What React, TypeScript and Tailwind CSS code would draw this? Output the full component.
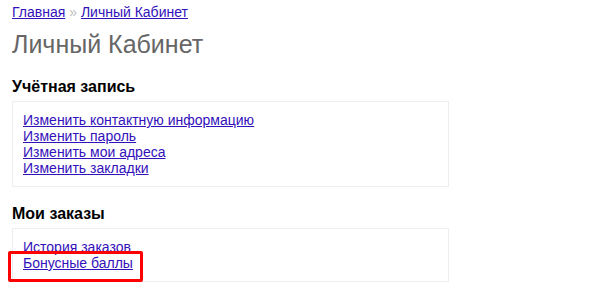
import React from "react";

const accountLinks = [
  "Изменить контактную информацию",
  "Изменить пароль",
  "Изменить мои адреса",
  "Изменить закладки",
];

function Section({ title, links, highlight }: { title: string; links: string[]; highlight?: number }) {
  return (
    <div className="mb-[17px]">
      <h2 className="text-[16px] font-bold leading-[20px] text-black mb-[4px]">{title}</h2>
      <div className="border border-[#eeeeee] w-[437px] px-[10px] pt-[10px] pb-[10px]">
        {links.map((l, i) => (
          <div key={l} className="relative leading-[16px]">
            <a href="#" className="text-[14px] text-[#3311bb] underline">
              {l}
            </a>
            {highlight === i && (
              <div className="absolute left-[-15px] top-[-4px] w-[135px] h-[31px] border-[3px] border-[#ff0000] rounded-[2px]" />
            )}
          </div>
        ))}
      </div>
    </div>
  );
}

export default function App() {
  return (
    <div className="w-[600px] h-[300px] overflow-hidden bg-white px-[12px] pt-[3px]" style={{ fontFamily: '"Liberation Sans", Arial, sans-serif' }}>
      <div className="text-[14px] leading-[18px]">
        <a href="#" className="text-[#3311bb] underline">Главная</a>
        <span className="text-[#bbbbbb]"> » </span>
        <a href="#" className="text-[#3311bb] underline">Личный Кабинет</a>
      </div>
      <h1 className="text-[25px] leading-[28px] text-[#666666] mt-[9px] mb-[19px]">Личный Кабинет</h1>
      <Section title="Учётная запись" links={accountLinks} />
      <Section title="Мои заказы" links={["История заказов", "Бонусные баллы"]} highlight={1} />
    </div>
  );
}
